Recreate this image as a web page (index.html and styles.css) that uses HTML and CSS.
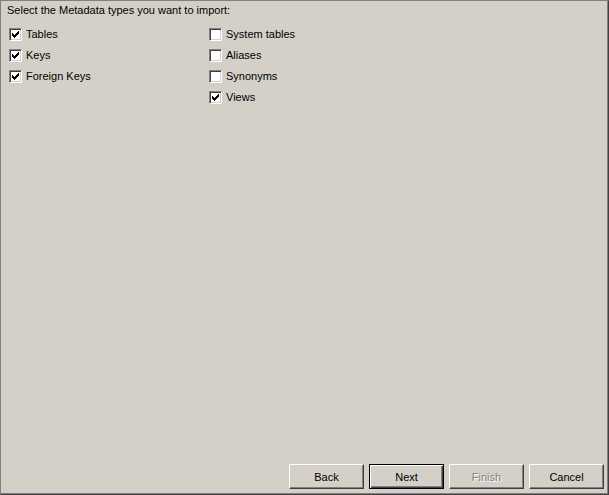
FILE: index.html
```html
<!DOCTYPE html>
<html>
  <head>
    <meta charset="UTF-8" />
    <title>Import Metadata</title>
    <link rel="stylesheet" href="styles.css">
  </head>
  <body>
    <div class="wizard">
      <div class="page">
        <p class="prompt">Select the Metadata types you want to import:</p>

        <div class="options">
          <label class="option"><span class="box checked"></span>Tables</label>
          <label class="option"><span class="box"></span>System tables</label>
          <label class="option"><span class="box checked"></span>Keys</label>
          <label class="option"><span class="box"></span>Aliases</label>
          <label class="option"><span class="box checked"></span>Foreign Keys</label>
          <label class="option"><span class="box"></span>Synonyms</label>
          <span></span>
          <label class="option"><span class="box checked"></span>Views</label>
        </div>
      </div>

      <div class="buttons">
        <button class="btn">Back</button>
        <button class="btn default">Next</button>
        <button class="btn" disabled>Finish</button>
        <button class="btn">Cancel</button>
      </div>
    </div>
  </body>
</html>
```

FILE: styles.css
```css
html,
body {
  margin: 0;
  height: 100%;
}

body {
  background-color: #d4d0c8;
  font-family: Tahoma, "Liberation Sans", Arial, sans-serif;
  font-size: 11px;
  color: #000;
}

.wizard {
  box-sizing: border-box;
  height: 100%;
  display: flex;
  flex-direction: column;
  border-top: 1px solid #808080;
  border-left: 1px solid #808080;
  border-right: 1px solid #404040;
  border-bottom: 1px solid #404040;
  box-shadow: inset -1px -1px 0 #808080;
}

.page {
  flex: 1;
  padding: 3px 0 0 6px;
}

.prompt {
  margin: 0 0 11px 0;
  line-height: 13px;
}

.options {
  display: grid;
  grid-template-columns: 200px auto;
  grid-auto-rows: 21px;
  padding-left: 2px;
}

.option {
  display: flex;
  align-items: flex-start;
  gap: 4px;
  line-height: 13px;
}

/* classic sunken checkbox */
.box {
  box-sizing: border-box;
  width: 13px;
  height: 13px;
  background-color: #fff;
  border-top: 1px solid #808080;
  border-left: 1px solid #808080;
  border-right: 1px solid #fff;
  border-bottom: 1px solid #fff;
  box-shadow: inset 1px 1px 0 #404040, inset -1px -1px 0 #d4d0c8;
  position: relative;
}

.box.checked::after {
  content: "";
  position: absolute;
  left: 2px;
  top: 2px;
  width: 7px;
  height: 7px;
  background: no-repeat center / 7px 7px
    url("data:image/svg+xml,%3Csvg xmlns='http://www.w3.org/2000/svg' width='7' height='7' shape-rendering='crispEdges'%3E%3Cpath fill='%23000' d='M6 0h1v3h-1zM5 1h1v3h-1zM4 2h1v3h-1zM3 3h1v3h-1zM2 4h1v3h-1zM1 3h1v3h-1zM0 2h1v3h-1z'/%3E%3C/svg%3E");
}

.buttons {
  display: flex;
  justify-content: flex-end;
  gap: 5px;
  padding: 0 4px 5px 0;
}

.btn {
  box-sizing: border-box;
  width: 75px;
  height: 25px;
  padding: 0;
  font-family: inherit;
  font-size: 11px;
  color: #000;
  background-color: #d4d0c8;
  border-top: 1px solid #fff;
  border-left: 1px solid #fff;
  border-right: 1px solid #404040;
  border-bottom: 1px solid #404040;
  box-shadow: inset -1px -1px 0 #808080;
}

.btn.default {
  border: 1px solid #000;
  box-shadow: inset 1px 1px 0 #fff, inset -1px -1px 0 #404040, inset -2px -2px 0 #808080;
}

.btn:disabled {
  color: #808080;
  text-shadow: 1px 1px 0 #fff;
}
```
